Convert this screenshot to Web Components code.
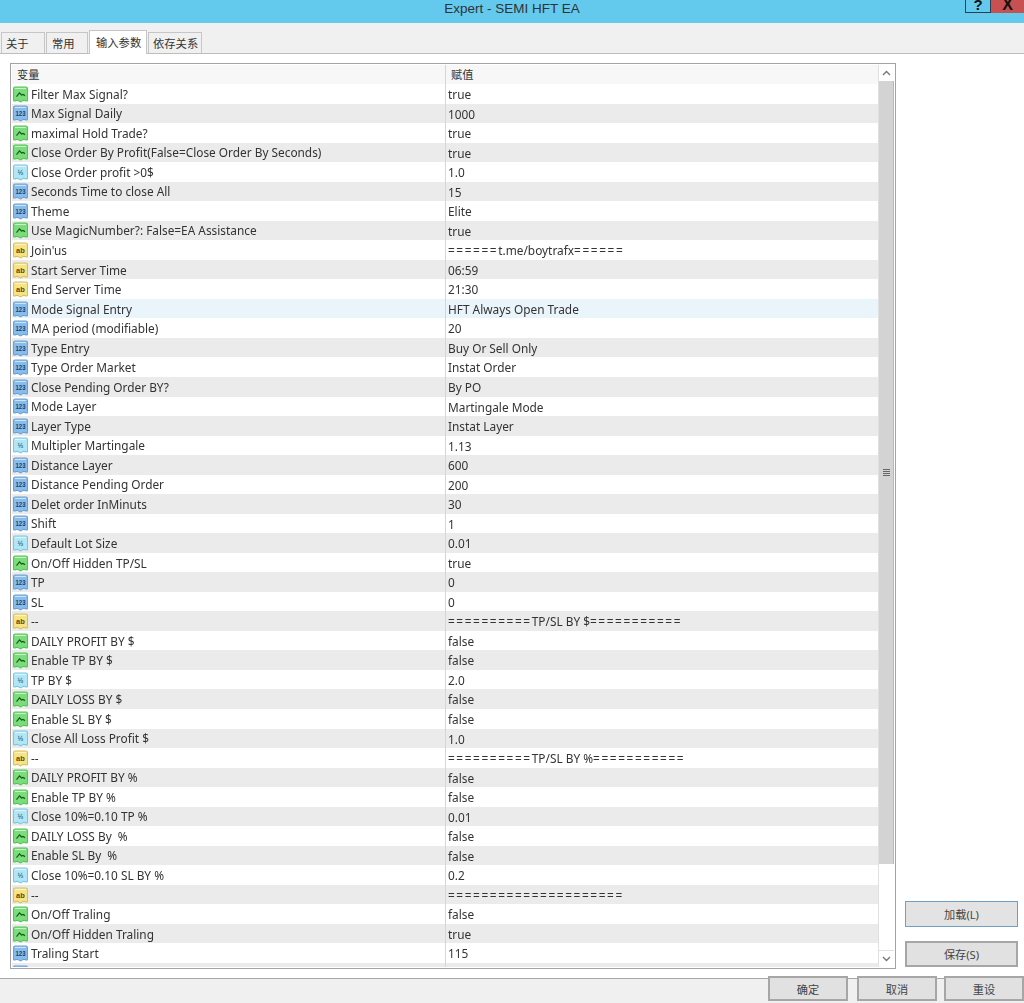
<!DOCTYPE html>
<html lang="zh"><head><meta charset="utf-8"><title>Expert - SEMI HFT EA</title>
<style>
html,body{margin:0;padding:0;background:#fff}
body{width:1024px;height:1003px;overflow:hidden;font-family:"Noto Sans","Noto Sans CJK SC",sans-serif;color:#333}
</style></head>
<body>
<ea-dialog>
  <ea-titlebar slot="title">Expert - SEMI HFT EA</ea-titlebar>
  <ea-tabs slot="tabs">
    <ea-tab style="width:44px;padding-left:4px">关于</ea-tab><ea-tab style="width:42px;padding-left:5px">常用</ea-tab><ea-tab active style="width:58px;padding-left:6px">输入参数</ea-tab><ea-tab style="width:54px;padding-left:4px">依存关系</ea-tab>
  </ea-tabs>
  <ea-grid slot="grid" id="grid"></ea-grid>
  <ea-button slot="side" focused style="width:113px;height:26px">加载(L)</ea-button>
  <ea-button slot="side" style="width:113px;height:26px">保存(S)</ea-button>
  <ea-button slot="foot" style="width:80px;height:25px">确定</ea-button>
  <ea-button slot="foot" style="width:80px;height:25px">取消</ea-button>
  <ea-button slot="foot" style="width:80px;height:25px;margin-left:-2px">重设</ea-button>
</ea-dialog>
<script>
const def=(n,html)=>{customElements.define(n,class extends HTMLElement{
  constructor(){super();this.attachShadow({mode:'open'}).innerHTML=html}
})};
def('ea-dialog',`<style>
:host{display:flex;flex-direction:column;width:1024px;height:1003px;overflow:hidden}
.main{display:flex;flex:1;min-height:0;padding:9px 6px 0 10px;background:#fff}
.side{display:flex;flex-direction:column;justify-content:flex-end;gap:14px;margin-left:9px;padding-bottom:2px}
.foot{display:flex;justify-content:flex-end;gap:9px;height:25px;margin-top:9px;background:#f0f0f0;border-top:1px solid #a8a8a8;box-sizing:border-box}
.foot ::slotted(*){margin-top:-3px}
</style>
<slot name="title"></slot><slot name="tabs"></slot>
<div class="main"><slot name="grid"></slot><div class="side"><slot name="side"></slot></div></div>
<div class="foot"><slot name="foot"></slot></div>`);
def('ea-titlebar',`<style>
:host{display:flex;position:relative;justify-content:center;align-items:flex-start;height:23px;background:#63c9ed;color:#333;font:13.5px/17px "Liberation Sans",sans-serif}
.help,.close{position:absolute;top:0;height:13px;box-sizing:border-box;font:bold 15px/10px "Liberation Sans",sans-serif;text-align:center;color:#111;overflow:hidden}
.help{right:33px;width:26px;border:1px solid #2c3e50;border-top:0}
.close{right:0;width:33px;background:#c75050;font-size:16px}
</style><slot></slot><div class="help">?</div><div class="close">X</div>`);
def('ea-tabs',`<style>
:host{display:flex;align-items:flex-end;height:31px;padding-left:1px;gap:1px;background:#f0f0f0;border-bottom:1px solid #bdbdbd;box-sizing:border-box}
</style><slot></slot>`);
def('ea-tab',`<style>
:host{display:flex;align-items:center;height:21px;box-sizing:border-box;background:#f0f0f0;border:1px solid #c6c6c6;border-bottom:0;font:11.3px "Noto Sans CJK SC",sans-serif;color:#333}
:host([active]){height:24px;margin-bottom:-1px;background:#fff;position:relative;padding-bottom:2px}
</style><slot></slot>`);
def('ea-grid',`<style>
:host{display:flex;width:886px;height:906px;box-sizing:border-box;border:1px solid #a3a3a3;padding:1px;background:#fff}
.col{flex:1;min-width:0;overflow:hidden;display:flex;flex-direction:column}
.head{flex:none;display:grid;grid-template-columns:433px 1fr;height:19px;background:#f7f7f7;font:11.2px/19px "Noto Sans CJK SC",sans-serif}
.head span{padding-left:5px}.head span+span{padding-left:5px;border-left:1px solid #d6d6d6}
</style><div class="col"><div class="head"><span>变量</span><span>赋值</span></div><slot></slot></div><ea-scrollbar></ea-scrollbar>`);
def('ea-scrollbar',`<style>
:host{display:flex;flex:none;flex-direction:column;width:16px;background:#fff;border-left:1px solid #e0e0e0;box-sizing:border-box}
.btn{flex:none;height:16px;display:flex;align-items:center;justify-content:center;background:#fff}
.thumb{flex:none;height:783px;background:#d3d3d3;border-right:1px solid #b8b8b8;display:flex;align-items:center;justify-content:center}
.grip{width:7px;height:7px;background:repeating-linear-gradient(#666 0 1px,#d3d3d3 1px 2px)}
.rest{flex:1}
.btn.down{border-top:1px solid #e0e0e0}
</style><div class="btn"><svg width="9" height="6" viewBox="0 0 9 6"><path d="M1 5 4.500 1.500 8 5" fill="none" stroke="#777" stroke-width="1.4"/></svg></div>
<div class="thumb"><div class="grip"></div></div><div class="rest"></div>
<div class="btn down"><svg width="9" height="6" viewBox="0 0 9 6"><path d="M1 1 4.500 4.500 8 1" fill="none" stroke="#777" stroke-width="1.4"/></svg></div>`);
def('ea-button',`<style>
:host{display:flex;flex:none;justify-content:center;align-items:center;box-sizing:border-box;background:#e1e1e1;border:2px solid #a6a6a6;color:#444;font:11.2px "Noto Sans","Noto Sans CJK SC",sans-serif}
:host([focused]){border-color:#6f9fc4;background:#e3e3e3;border-width:1.5px}
</style><slot></slot>`);
const ICONS={
 b:{f:'#7bdc7b',s:'#55c455',inner:'<path d="M3.500 10 6.500 6.500 8.500 8.500 10 8 12 9" fill="none" stroke="#145a14" stroke-width="1.200"/>'},
 i:{f:'#86bdec',s:'#6f9fd0',inner:'<text x="7.500" y="10" text-anchor="middle" font-family="Liberation Sans" font-weight="700" font-size="6" fill="#1d3f72">123</text>'},
 d:{f:'#b0e6f5',s:'#7cc6dd',inner:'<text x="7.500" y="10" text-anchor="middle" font-family="Liberation Sans" font-weight="700" font-size="7" fill="#1f6a86">½</text>'},
 s:{f:'#f6e484',s:'#d6bf62',inner:'<text x="7.500" y="10" text-anchor="middle" font-family="Liberation Sans" font-weight="700" font-size="7.500" fill="#5a4a10">ab</text>'}
};
customElements.define('ea-icon',class extends HTMLElement{
 constructor(){super();this.attachShadow({mode:'open'})}
 connectedCallback(){const c=ICONS[this.getAttribute('type')];
  this.shadowRoot.innerHTML=`<style>:host{display:block;flex:none;width:15px;height:17px;margin-top:1px}svg{display:block}</style><svg width="15" height="17" viewBox="0 0 15 16" preserveAspectRatio="none"><path d="M2 1H13Q14.500 1 14.500 2.500V13.500Q14.500 14.500 13 14L10.500 13.500 7.500 15 4.500 13.500 2 14Q.5 14.500 .5 13.500V2.500Q.5 1 2 1Z" fill="${c.f}" stroke="${c.s}"/><path d="M2 2.300H13" stroke="#fff" stroke-opacity=".6"/>${c.inner}</svg>`}
});
customElements.define('ea-row',class extends HTMLElement{
 constructor(){super();this.attachShadow({mode:'open'})}
 connectedCallback(){
  const val=this.getAttribute('value').replace(/=+/g,m=>`<span class="eq">${m}</span>`);
  this.shadowRoot.innerHTML=`<style>
  :host{display:grid;flex:none;grid-template-columns:433px 1fr;height:19.545px;background:#fff;font:11.85px/20px "Noto Sans",sans-serif;color:#333;box-sizing:border-box}
  :host([alt]){background:#ebebeb}
  :host([sel]){background:#eaf4fb}
  .n{display:flex;align-items:center;gap:3px;padding-left:1px;white-space:pre;overflow:hidden}
  .v{padding-left:2px;border-left:1px solid #d6d6d6;white-space:pre;overflow:hidden}
  .t{filter:blur(.3px)}
  .eq{letter-spacing:1.6px}
  </style><div class="n"><ea-icon type="${this.getAttribute('type')}"></ea-icon><span class="t">${this.getAttribute('name')}</span></div><div class="v"><span class="t">${val}</span></div>`}
});
const rows=`b|Filter Max Signal?|true
i|Max Signal Daily|1000
b|maximal Hold Trade?|true
b|Close Order By Profit(False=Close Order By Seconds)|true
d|Close Order profit &gt;0$|1.0
i|Seconds Time to close All|15
i|Theme|Elite
b|Use MagicNumber?: False=EA Assistance|true
s|Join'us|======t.me/boytrafx======
s|Start Server Time|06:59
s|End Server Time|21:30
i|Mode Signal Entry|HFT Always Open Trade
i|MA period (modifiable)|20
i|Type Entry|Buy Or Sell Only
i|Type Order Market|Instat Order
i|Close Pending Order BY?|By PO
i|Mode Layer|Martingale Mode
i|Layer Type|Instat Layer
d|Multipler Martingale|1.13
i|Distance Layer|600
i|Distance Pending Order|200
i|Delet order InMinuts|30
i|Shift|1
d|Default Lot Size|0.01
b|On/Off Hidden TP/SL|true
i|TP|0
i|SL|0
s|--|==========TP/SL BY $===========
b|DAILY PROFIT BY $|false
b|Enable TP BY $|false
d|TP BY $|2.0
b|DAILY LOSS BY $|false
b|Enable SL BY $|false
d|Close All Loss Profit $|1.0
s|--|==========TP/SL BY %===========
b|DAILY PROFIT BY %|false
b|Enable TP BY %|false
d|Close 10%=0.10 TP %|0.01
b|DAILY LOSS By  %|false
b|Enable SL By  %|false
d|Close 10%=0.10 SL BY %|0.2
s|--|=====================
b|On/Off Traling|false
b|On/Off Hidden Traling|true
i|Traling Start|115
i||`.split('\n');
const g=document.getElementById('grid');
rows.forEach((r,i)=>{const [t,n,v]=r.split('|');const e=document.createElement('ea-row');
 e.setAttribute('type',t);e.setAttribute('name',n);e.setAttribute('value',v);
 if(i%2)e.setAttribute('alt','');if(i==11)e.setAttribute('sel','');g.appendChild(e)});
</script>
</body></html>
